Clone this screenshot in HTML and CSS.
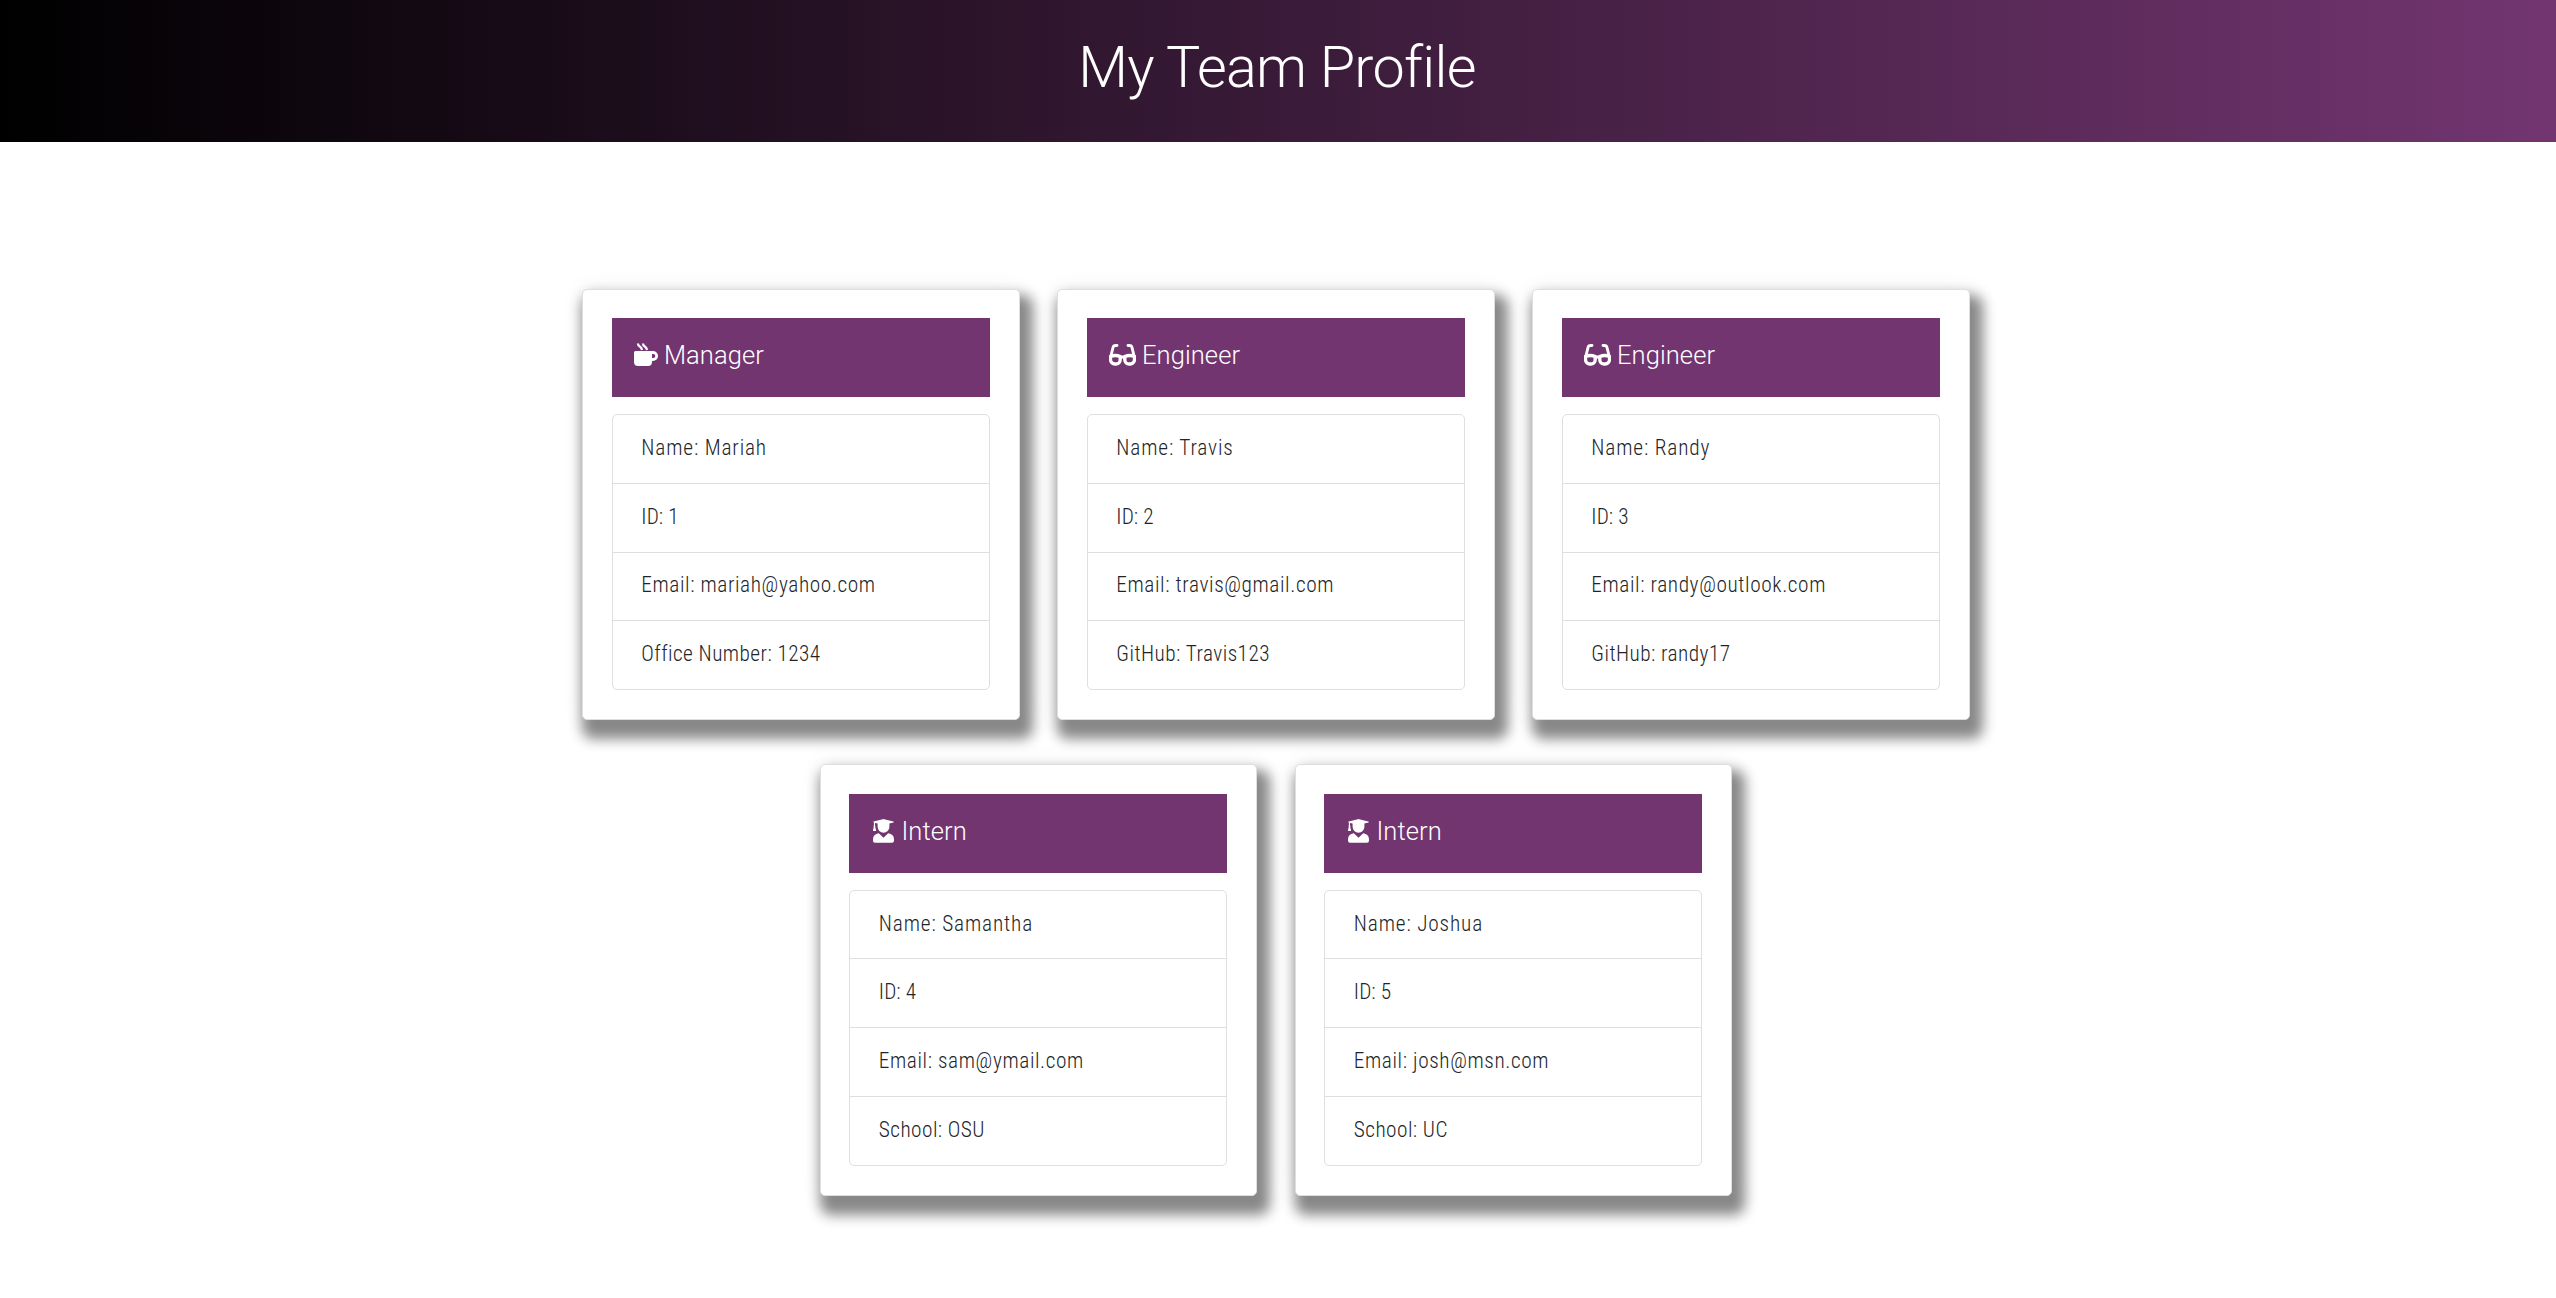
FILE: index.html
```html
<!DOCTYPE html>
<html lang="en">
<head>
<meta charset="utf-8">
<title>My Team Profile</title>
<link rel="stylesheet" href="styles.css">
</head>
<body>
<header class="banner"><h1 class="title">My Team Profile</h1></header>
<svg class="sprite" aria-hidden="true">
  <symbol id="mug" viewBox="0 0 24 24"><path d="M0 9.500Q0 8 1.500 8H19a5 5 0 0 1 0 10h-1v1a4 4 0 0 1-4 4H4a4 4 0 0 1-4-4zM18 11v4h1.300a2 2 0 0 0 0-4z"/><path d="M4 .5q0 2 1.800 3T8 7M9 .5q0 2 1.800 3T13 7" fill="none" stroke="currentColor" stroke-width="2.300"/></symbol>
  <symbol id="glasses" viewBox="0 0 27 24"><path d="M8 2.500H6.500Q4.500 2.500 4 4.500L1.700 14M19 2.500h1.500q2 0 2.500 2l2.300 9.500M11 14.500q2.500-1 5 0" fill="none" stroke="currentColor" stroke-width="2.900" stroke-linecap="round"/><path d="M1.500 13.500q5-2 9.700 0v3.200a4.300 4.300 0 0 1-4.300 4.300H6a4.300 4.300 0 0 1-4.500-4.300zM15.800 13.500q5-2 9.700 0v3.200a4.300 4.300 0 0 1-4.500 4.300h-.9a4.300 4.300 0 0 1-4.300-4.300z" fill="none" stroke="currentColor" stroke-width="3.300"/></symbol>
  <symbol id="graduate" viewBox="0 0 21 24"><path d="M.6 2.500 9.800.2q.7-.2 1.400 0l9.200 2.300q.9.500 0 1l-4 1v3.300a5.900 5.900 0 0 1-11.800 0V4.500L2 3.900v2.300q.8.800.2 1.600l.9 3.600q0 .5-.5.500H.4q-.5 0-.4-.6L.8 7.800Q.2 7 .9 6.200V3.600Q-.2 3 .6 2.500zM5.800 14.200l4.700 4.600 4.700-4.600Q21 15 21 20.500v1.200q0 2.100-2 2.100H2q-2 0-2-2.100v-1.200q0-5.500 5.800-6.300z"/></symbol>
</svg>
<main class="team">
  <section class="card">
    <h2 class="role"><svg class="icon icon-mug"><use href="#mug"/></svg><span>Manager</span></h2>
    <ul class="facts"><li class="name">Name: Mariah</li><li class="id">ID: 1</li><li class="email">Email: mariah@yahoo.com</li><li>Office Number: 1234</li></ul>
  </section>
  <section class="card">
    <h2 class="role"><svg class="icon icon-glasses"><use href="#glasses"/></svg><span>Engineer</span></h2>
    <ul class="facts"><li class="name">Name: Travis</li><li class="id">ID: 2</li><li class="email">Email: travis@gmail.com</li><li>GitHub: Travis123</li></ul>
  </section>
  <section class="card">
    <h2 class="role"><svg class="icon icon-glasses"><use href="#glasses"/></svg><span>Engineer</span></h2>
    <ul class="facts"><li class="name">Name: Randy</li><li class="id">ID: 3</li><li class="email">Email: randy@outlook.com</li><li>GitHub: randy17</li></ul>
  </section>
  <section class="card">
    <h2 class="role"><svg class="icon icon-graduate"><use href="#graduate"/></svg><span>Intern</span></h2>
    <ul class="facts"><li class="name">Name: Samantha</li><li class="id">ID: 4</li><li class="email">Email: sam@ymail.com</li><li>School: OSU</li></ul>
  </section>
  <section class="card">
    <h2 class="role"><svg class="icon icon-graduate"><use href="#graduate"/></svg><span>Intern</span></h2>
    <ul class="facts"><li class="name">Name: Joshua</li><li class="id">ID: 5</li><li class="email">Email: josh@msn.com</li><li>School: UC</li></ul>
  </section>
</main>
</body>
</html>
```
FILE: styles.css
```css
* { box-sizing: border-box; }
body { margin: 0; min-height: 1298px; background: #fff; color: #212529; font-family: Roboto, sans-serif; font-weight: 300; font-stretch: 75%; }
.sprite { display: none; }
.banner { height: 142px; padding-right: 2px; display: flex; justify-content: center; align-items: center; background: linear-gradient(to right, #000, #723570); }
.title { margin: 0; padding-bottom: 8px; color: #fff; font-size: 57.500px; font-weight: 300; font-stretch: 100%; line-height: 1.200; letter-spacing: -.7px; }
.team { padding: 146.700px 523.800px 60px 519.700px; display: flex; flex-wrap: wrap; justify-content: center; column-gap: 37.500px; row-gap: 44.330px; }
.card { width: 437.500px; height: 431.270px; padding: 28.750px; border: 1px solid #dfdfdf; border-radius: 5px; background: #fff; box-shadow: 6.250px 12.500px 12.500px 6.250px #888, 0 0 25px rgba(0, 0, 0, .06); }
.role { height: 78.750px; margin: 0 0 16.900px; padding: 0 0 5px 22px; display: flex; align-items: center; background: #723570; color: #fff; font-size: 25.500px; font-weight: 300; font-stretch: 100%; letter-spacing: .1px; }
.icon { height: 24px; fill: currentColor; flex: none; }
.icon-mug { width: 24px; margin-right: 6px; }
.icon-glasses { width: 27px; margin-right: 6px; }
.icon-graduate { width: 21px; margin: 0 7px 0 2px; }
.facts { margin: 0; padding: 0; list-style: none; border: 1px solid #dfdfdf; border-radius: 5px; }
.facts li { height: 68.780px; padding: 0 0 3px 28.400px; display: flex; align-items: center; border-bottom: 1px solid #dfdfdf; font-size: 21.300px; letter-spacing: .45px; }
.facts .name { letter-spacing: .85px; }
.facts .id { letter-spacing: .1px; }
.facts .email { letter-spacing: .6px; }
.facts li:last-child { height: 67.780px; border-bottom: 0; }
```
